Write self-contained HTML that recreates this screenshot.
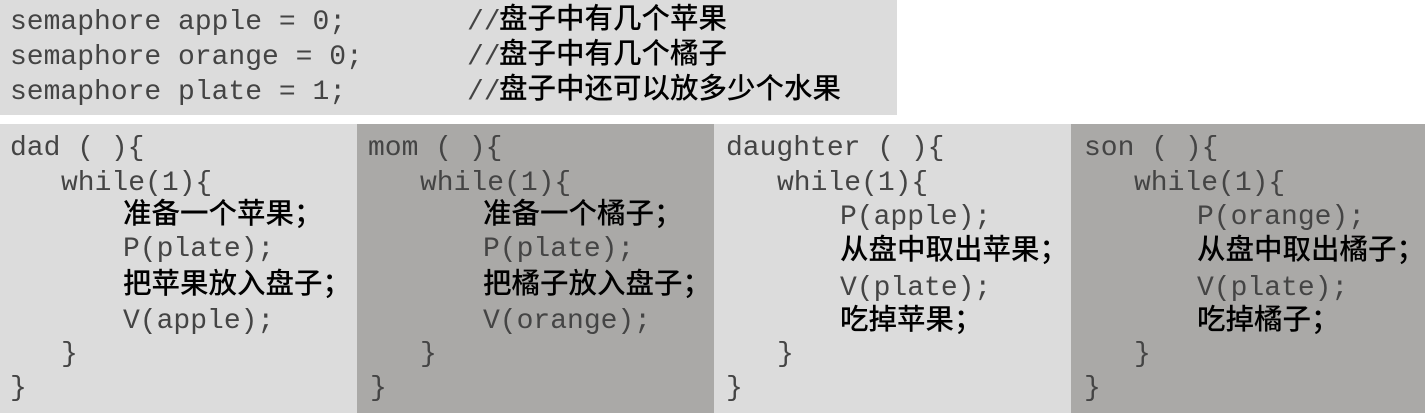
<!DOCTYPE html>
<html><head><meta charset="utf-8"><style>
body{margin:0;width:1425px;height:413px;background:#fff;position:relative;overflow:hidden}
.box{position:absolute}
.l{position:absolute;white-space:pre;line-height:1}
.m{font-family:"Liberation Mono",monospace;font-size:28px;color:#444;font-weight:400}
.c{font-family:"Liberation Sans","Noto Sans CJK SC",sans-serif;font-size:28.5px;color:#000;font-weight:500}
</style></head><body>
<div class="box" style="left:0;top:0;width:897px;height:115px;background:#dcdcdc"></div>
<div class="box" style="left:0;top:124px;width:357px;height:289px;background:#dcdcdc"></div>
<div class="box" style="left:357px;top:124px;width:357px;height:289px;background:#aaa9a7"></div>
<div class="box" style="left:714px;top:124px;width:357px;height:289px;background:#dcdcdc"></div>
<div class="box" style="left:1071px;top:124px;width:354px;height:289px;background:#aaa9a7"></div>

<div class="l m" style="left:10px;top:9px">semaphore apple = 0;</div>
<div class="l m" style="left:10px;top:44px">semaphore orange = 0;</div>
<div class="l m" style="left:10px;top:79px">semaphore plate = 1;</div>
<div class="l m" style="left:467px;top:9px">//</div>
<div class="l m" style="left:467px;top:44px">//</div>
<div class="l m" style="left:467px;top:79px">//</div>
<div class="l c" style="left:499px;top:5px">盘子中有几个苹果</div>
<div class="l c" style="left:499px;top:40px">盘子中有几个橘子</div>
<div class="l c" style="left:499px;top:75px">盘子中还可以放多少个水果</div>

<div class="l m" style="left:10px;top:135px">dad ( ){</div>
<div class="l m" style="left:61px;top:170px">while(1){</div>
<div class="l c" style="left:123px;top:200px">准备一个苹果；</div>
<div class="l m" style="left:123px;top:236px">P(plate);</div>
<div class="l c" style="left:123px;top:270px">把苹果放入盘子；</div>
<div class="l m" style="left:123px;top:308px">V(apple);</div>
<div class="l m" style="left:61px;top:341px">}</div>
<div class="l m" style="left:10px;top:375px">}</div>

<div class="l m" style="left:368px;top:135px">mom ( ){</div>
<div class="l m" style="left:420px;top:170px">while(1){</div>
<div class="l c" style="left:483px;top:200px">准备一个橘子；</div>
<div class="l m" style="left:483px;top:236px">P(plate);</div>
<div class="l c" style="left:483px;top:270px">把橘子放入盘子；</div>
<div class="l m" style="left:483px;top:308px">V(orange);</div>
<div class="l m" style="left:420px;top:341px">}</div>
<div class="l m" style="left:370px;top:375px">}</div>

<div class="l m" style="left:726px;top:135px">daughter ( ){</div>
<div class="l m" style="left:777px;top:170px">while(1){</div>
<div class="l m" style="left:840px;top:204px">P(apple);</div>
<div class="l c" style="left:840px;top:236px">从盘中取出苹果；</div>
<div class="l m" style="left:840px;top:275px">V(plate);</div>
<div class="l c" style="left:840px;top:306px">吃掉苹果；</div>
<div class="l m" style="left:777px;top:341px">}</div>
<div class="l m" style="left:726px;top:375px">}</div>

<div class="l m" style="left:1084px;top:135px">son ( ){</div>
<div class="l m" style="left:1134px;top:170px">while(1){</div>
<div class="l m" style="left:1197px;top:204px">P(orange);</div>
<div class="l c" style="left:1197px;top:236px">从盘中取出橘子；</div>
<div class="l m" style="left:1197px;top:275px">V(plate);</div>
<div class="l c" style="left:1197px;top:306px">吃掉橘子；</div>
<div class="l m" style="left:1134px;top:341px">}</div>
<div class="l m" style="left:1084px;top:375px">}</div>
</body></html>
